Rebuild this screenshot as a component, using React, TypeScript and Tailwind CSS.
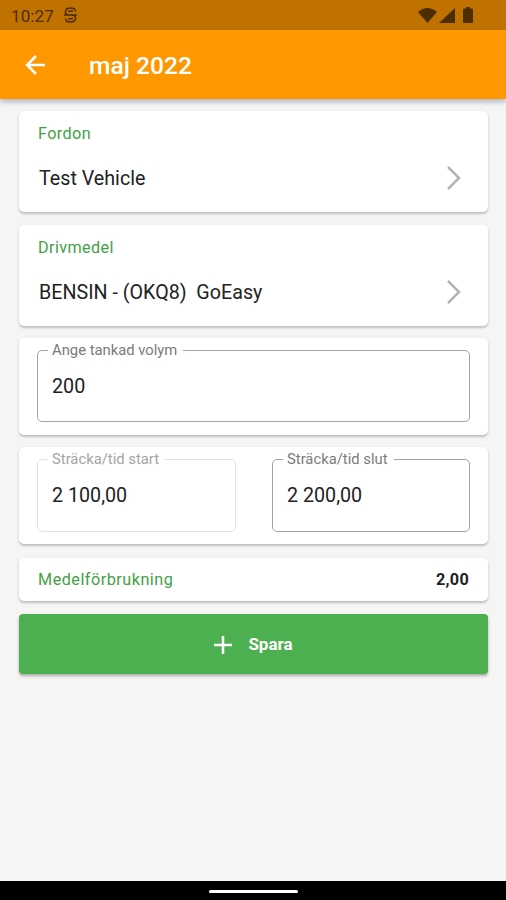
import type { ReactNode } from "react";

function Card({ className, children }: { className: string; children: ReactNode }) {
  return (
    <section
      className={`shrink-0 rounded-[5px] bg-white shadow-[0_2px_2px_rgba(0,0,0,0.18),0_1px_4px_rgba(0,0,0,0.07)] ${className}`}
    >
      {children}
    </section>
  );
}

function PickerCard({ label, value }: { label: string; value: string }) {
  return (
    <Card className="h-[101px] px-[19px] pt-3">
      <h2 className="text-[16.2px] leading-[22px] tracking-[0.4px] text-[#43a047]">{label}</h2>
      <div className="mt-[14px] flex items-center justify-between pl-px pr-[8px]">
        <span className="whitespace-pre pt-[2px] text-[19.7px] leading-9 text-[#222]">{value}</span>
        <svg className="h-6 w-[14px]" viewBox="0 0 14 24" fill="none" stroke="#b3b3b3" strokeWidth="2.5">
          <path d="M1 1 12 12 1 23" />
        </svg>
      </div>
    </Card>
  );
}

function Field({ label, value, className, legendClass }: { label: string; value: string; className: string; legendClass: string }) {
  return (
    <fieldset className={`min-w-0 rounded-[5px] border pl-[10px] ${className}`}>
      <legend className={`h-4 whitespace-nowrap pl-1 pr-1.5 text-[14.8px] leading-4 ${legendClass}`}>{label}</legend>
      <div className="pl-1 pt-[17px] text-[19.7px] leading-6 text-[#222]">{value}</div>
    </fieldset>
  );
}

export default function App() {
  return (
    <div className="flex h-[900px] w-[506px] flex-col overflow-hidden bg-[#f5f5f5] font-['Roboto',sans-serif]">
      <div className="flex h-[30px] shrink-0 items-center bg-[#bf7200] pl-[11px] pr-[33px] text-[#4c2e00]">
        <span className="pt-px text-[17px] leading-[30px] tracking-[0.1px]">10:27</span>
        <svg className="ml-[10px] h-4 w-[13px]" viewBox="0 0 13 16" fill="none" stroke="currentColor" strokeWidth="1.5">
          <path d="M1.5 5.5V4.5Q1.5 1 6.5 1T11.5 4.5M4 4.3H9M1.5 5.5Q1.5 8 6.5 8T11.5 10.5V11Q11.5 15 6.5 15T1.5 11.5M4 11.7H9M0 8H13" />
        </svg>
        <div className="ml-auto flex items-center">
          <svg className="h-[15px] w-[19px]" viewBox="0 0 19 15" fill="currentColor">
            <path d="M0 4Q9.5-4 19 4L9.5 15Z" />
          </svg>
          <svg className="ml-[2px] h-[15px] w-[16px]" viewBox="0 0 16 15" fill="currentColor">
            <path d="M16 0V15H0Z" />
          </svg>
          <svg className="ml-[8px] h-4 w-[10px]" viewBox="0 0 10 16" fill="currentColor">
            <path d="M3 0H7V1.5H9Q10 1.5 10 2.5V15Q10 16 9 16H1Q0 16 0 15V2.5Q0 1.5 1 1.5H3Z" />
          </svg>
        </div>
      </div>

      <header className="flex h-[69px] shrink-0 items-center bg-[#ff9800] pl-[25px] text-white shadow-[0_3px_5px_rgba(40,70,100,0.35)]">
        <svg className="h-5 w-5" viewBox="0 0 20 20" fill="none" stroke="currentColor" strokeWidth="2.5">
          <path d="M20 10H2M11 1 2 10 11 19" />
        </svg>
        <h1 className="ml-[44px] pt-[2px] text-[24.6px] font-medium leading-8">maj 2022</h1>
      </header>

      <main className="flex grow flex-col pl-[19px] pr-[18px] pt-3">
        <PickerCard label="Fordon" value="Test Vehicle" />
        <div className="h-[13px] shrink-0" />
        <PickerCard label="Drivmedel" value="BENSIN - (OKQ8)  GoEasy" />
        <Card className="mt-3 h-[97px] px-[18px] pt-1">
          <Field label="Ange tankad volym" value="200" className="h-[80px] border-[#a3a3a3]" legendClass="text-[#7b7b7b]" />
        </Card>
        <Card className="mt-3 grid h-[97px] grid-cols-[199px_198px] items-start justify-between px-[18px] pt-1">
          <Field label="Sträcka/tid start" value="2 100,00" className="h-[81px] border-[#e2e2e2]" legendClass="text-[#a5a5a5]" />
          <Field label="Sträcka/tid slut" value="2 200,00" className="h-[81px] border-[#a3a3a3]" legendClass="text-[#7b7b7b]" />
        </Card>
        <Card className="mt-[14px] flex h-[43px] items-center justify-between px-[19px] pt-px text-[16.2px]">
          <span className="tracking-[0.5px] text-[#43a047]">Medelförbrukning</span>
          <span className="font-bold tracking-[0.3px] text-[#222]">2,00</span>
        </Card>
        <button className="mt-[13px] flex h-[60px] shrink-0 items-center justify-center gap-4 rounded-[4px] bg-[#4caf50] pt-px text-[17px] font-bold text-white shadow-[0_2px_3px_rgba(0,0,0,0.3)]">
          <svg className="h-[18px] w-[18px]" viewBox="0 0 18 18" stroke="currentColor" strokeWidth="2.5">
            <path d="M9 0V18M0 9H18" />
          </svg>
          Spara
        </button>
      </main>

      <footer className="flex h-[19px] shrink-0 items-center justify-center bg-black">
        <div className="mt-[2px] h-[3px] w-[89px] rounded-full bg-white" />
      </footer>
    </div>
  );
}
